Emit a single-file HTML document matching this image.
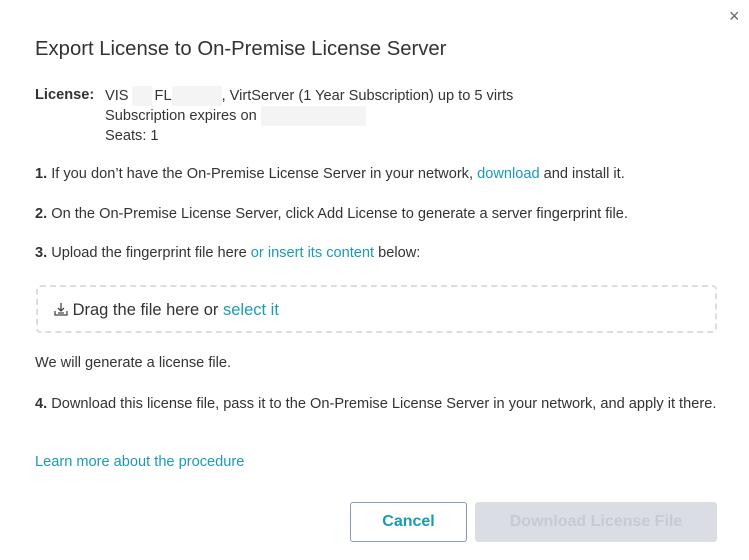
<!DOCTYPE html>
<html><head><style>
body{margin:0;background:#fff;font-family:"Liberation Sans",sans-serif;color:#333;font-size:14.6px;width:749px;height:560px;position:relative;overflow:hidden}
.a{position:absolute;white-space:nowrap}
.l{color:#1a9bb3}
b{font-weight:bold}
.blur{display:inline-block;background:#f4f4f4;height:20px;vertical-align:middle}
</style></head><body>
<div class="a" style="left:729px;top:6px;font-size:18px;color:#666">×</div>
<div class="a" style="left:35px;top:38px;font-size:20.3px;color:#333">Export License to On-Premise License Server</div>
<div class="a" style="left:35px;top:87px;font-weight:bold">License:</div>
<div class="a" style="left:105px;top:86px;line-height:20px">VIS<span class="blur" style="width:20px;margin:0 3px"></span>FL<span class="blur" style="width:50px"></span>, VirtServer (1 Year Subscription) up to 5 virts<br>Subscription expires on <span class="blur" style="width:105px"></span><br>Seats: 1</div>
<div class="a" style="left:35px;top:166px"><b>1.</b> If you don’t have the On-Premise License Server in your network, <span class="l">download</span> and install it.</div>
<div class="a" style="left:35px;top:206px"><b>2.</b> On the On-Premise License Server, click Add License to generate a server fingerprint file.</div>
<div class="a" style="left:35px;top:245px"><b>3.</b> Upload the fingerprint file here <span class="l">or insert its content</span> below:</div>
<div class="a" style="left:36px;top:285px;width:677px;height:44px;border:2px dashed #ddd;border-radius:4px"></div>
<div class="a" style="left:54px;top:301px;font-size:16.5px"><svg width="14" height="14" viewBox="0 0 14 14" style="vertical-align:-1px" fill="none" stroke="#444" stroke-width="1.3"><path d="M7 1v8M4 6l3 3 3-3M1 9v4h12V9M4 11h6"/></svg> Drag the file here or <span class="l">select it</span></div>
<div class="a" style="left:35px;top:355px">We will generate a license file.</div>
<div class="a" style="left:35px;top:396px"><b>4.</b> Download this license file, pass it to the On-Premise License Server in your network, and apply it there.</div>
<div class="a l" style="left:35px;top:454px">Learn more about the procedure</div>
<div class="a" style="left:350px;top:502px;width:115px;height:38px;border:1px solid #8a9bab;border-radius:3px;text-align:center;line-height:38px;color:#1a9bb3;font-size:16px;font-weight:bold">Cancel</div>
<div class="a" style="left:475px;top:502px;width:242px;height:40px;background:#dadee4;border-radius:3px;text-align:center;line-height:40px;color:#c5cbd3;font-size:16px;font-weight:bold">Download License File</div>
</body></html>
